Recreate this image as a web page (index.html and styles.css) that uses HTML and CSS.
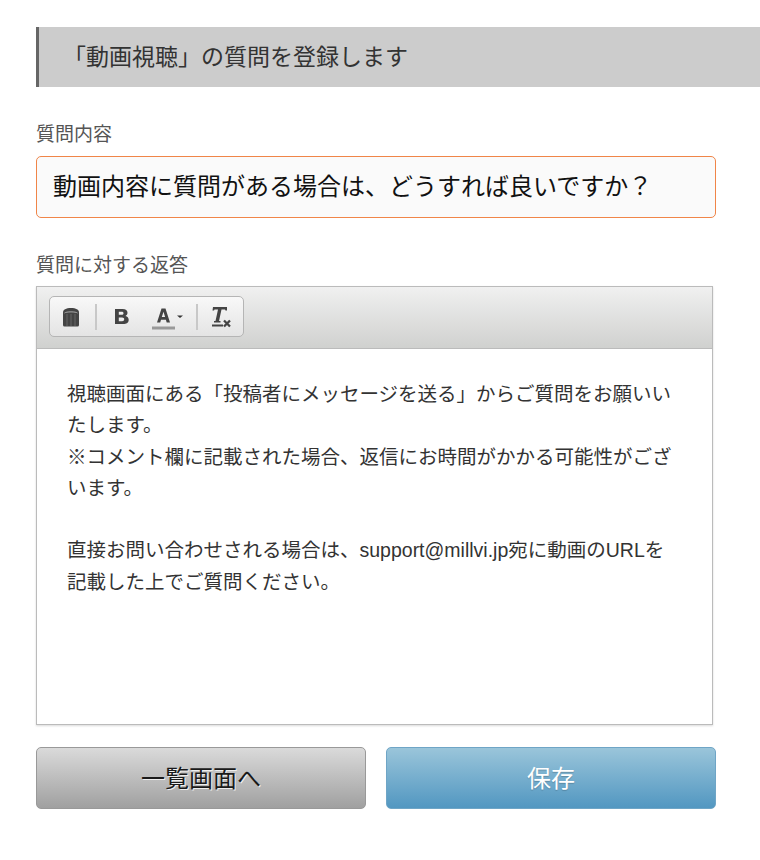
FILE: index.html
```html
<!DOCTYPE html>
<html lang="ja">
<head>
<meta charset="utf-8">
<title>質問登録</title>
<link rel="stylesheet" href="styles.css">
</head>
<body>
<main class="page">
  <h1 class="title">「動画視聴」の質問を登録します</h1>
  <label class="label label-first">質問内容</label>
  <div class="input">動画内容に質問がある場合は、どうすれば良いですか？</div>
  <label class="label label-second">質問に対する返答</label>
  <div class="editor">
    <div class="toolbar">
      <div class="tools">
        <span class="tool tool-source">
          <svg width="18" height="20" viewBox="0 0 18 20"><path d="M1 5.500C1 2.500 4 1 9 1s8 1.500 8 4.500V18a1.500 1.500 0 0 1-1.500 1.500h-13A1.500 1.500 0 0 1 1 18Z" fill="#444"/><path d="M2.500 6C4 4.500 14 4.500 15.500 6" fill="none" stroke="#aaa" stroke-width="1"/><path d="M5 7v12M9 7v12M13 7v12" stroke="#666" stroke-width="1"/></svg>
        </span>
        <span class="sep"></span>
        <span class="tool tool-bold">
          <svg width="16" height="18" viewBox="0 0 16 18"><path d="M1 1h7.500c3.300 0 5 1.400 5 3.800 0 1.500-.8 2.600-2 3.100 1.900.5 3.200 1.800 3.200 3.800 0 2.900-2.200 4.300-5.500 4.300H1ZM4.800 3.800v3h2.900c1.100 0 1.800-.5 1.800-1.500s-.7-1.500-1.800-1.500ZM4.800 9.400v3.800h3.300c1.300 0 2.100-.7 2.100-1.900s-.8-1.900-2.100-1.900Z" fill="#444" fill-rule="evenodd"/></svg>
        </span>
        <span class="tool tool-color">
          <svg width="33" height="26" viewBox="0 0 33 26"><path d="M9.500 4.500h4L18 18.500h-3.300l-.8-2.800H9l-.8 2.800H5ZM9.800 13h3.300l-1.600-5.300Z" fill="#444" fill-rule="evenodd"/><rect x="0" y="22.500" width="23" height="3" fill="#999"/><path d="M25 11.500h6l-3 2.500Z" fill="#333"/></svg>
        </span>
        <span class="sep sep-right"></span>
        <span class="tool tool-clear">
          <svg width="22" height="24" viewBox="0 0 22 24"><path d="M2 2h14v3.500h-1.500l-.5-1H10.500L8 16h1.500v1.500H3V16h1.500L7 4.500H3.500l-.5 1H1.500Z" fill="#444"/><rect x="1" y="19.500" width="11" height="2" fill="#444"/><path d="M13 15.500l6 6M19 15.500l-6 6" stroke="#444" stroke-width="2.300"/></svg>
        </span>
      </div>
    </div>
    <div class="content">
      <p>視聴画面にある「投稿者にメッセージを送る」からご質問をお願いいたします。<br>※コメント欄に記載された場合、返信にお時間がかかる可能性がございます。</p>
      <p>直接お問い合わせされる場合は、support@millvi.jp宛に動画のURLを記載した上でご質問ください。</p>
    </div>
  </div>
  <div class="actions">
    <button class="btn btn-gray" type="button">一覧画面へ</button>
    <button class="btn btn-blue" type="button">保存</button>
  </div>
</main>
</body>
</html>
```
FILE: styles.css
```css
* { box-sizing: border-box; }
html, body { margin: 0; padding: 0; background: #fff; }
body {
  font-family: "Liberation Sans", "Noto Sans CJK JP", sans-serif;
  color: #333;
}
.page {
  padding: 27px 0 0 36px;
  width: 760px;
}
.title {
  margin: 0;
  height: 60px;
  line-height: 60px;
  padding-left: 24px;
  border-left: 3px solid #666;
  background: #ccc;
  font-size: 23px;
  font-weight: 400;
  color: #333;
}
.label {
  display: block;
  font-size: 19px;
  line-height: 24px;
  color: #555;
}
.label-first { margin-top: 36px; }
.label-second { margin-top: 36px; margin-bottom: -1px; }
.input {
  margin-top: 9px;
  width: 680px;
  height: 62px;
  line-height: 60px;
  padding-left: 16px;
  border: 1px solid #f08548;
  border-radius: 5px;
  background: #fafafa;
  font-size: 24px;
  color: #111;
  white-space: nowrap;
}
.editor {
  margin-top: 9px;
  width: 677px;
  height: 439px;
  border: 1px solid #bbb;
  box-shadow: 0 1px 2px rgba(0, 0, 0, .15);
  background: #fff;
  display: flex;
  flex-direction: column;
}
.toolbar {
  height: 62px;
  flex: none;
  padding: 9px 0 0 12px;
  background: linear-gradient(#f0f0f0, #d0d1cf);
  border-bottom: 1px solid #bbb;
}
.tools {
  width: 195px;
  height: 41px;
  border: 1px solid #b5b5b5;
  border-radius: 5px;
  background: linear-gradient(#f8f8f8, #e4e4e4);
  display: flex;
  align-items: center;
  padding-left: 12px;
}
.tool { display: flex; flex: none; }
.sep {
  width: 2px;
  height: 26px;
  background: #c8c8c8;
  flex: none;
  margin-left: 15px;
}
.tool-source { margin-top: 1px; }
.tool-bold { margin-left: 17px; }
.tool-color { margin-left: 22px; }
.sep-right { margin-left: 11px; }
.tool-clear { margin-left: 13px; }
.content {
  padding: 30px 30px 0;
  font-size: 19.5px;
  line-height: 31.3px;
  color: #333;
}
.content p { margin: 0 0 31.3px; }
.actions {
  margin-top: 22px;
  width: 680px;
  display: flex;
  gap: 20px;
}
.btn {
  flex: 1;
  height: 62px;
  border-radius: 5px;
  font-family: inherit;
  font-size: 24px;
  padding: 0 0 3px;
}
.btn-gray {
  border: 1px solid #999;
  background: linear-gradient(#dadada, #a0a0a0);
  color: #1a1a1a;
  text-shadow: 1px 1px 0 #eee;
}
.btn-blue {
  border: 1px solid #6fa5c6;
  background: linear-gradient(#9ac5da, #5297c1);
  color: #fff;
  text-shadow: 0 1px 1px rgba(0, 0, 0, .2);
}
```
